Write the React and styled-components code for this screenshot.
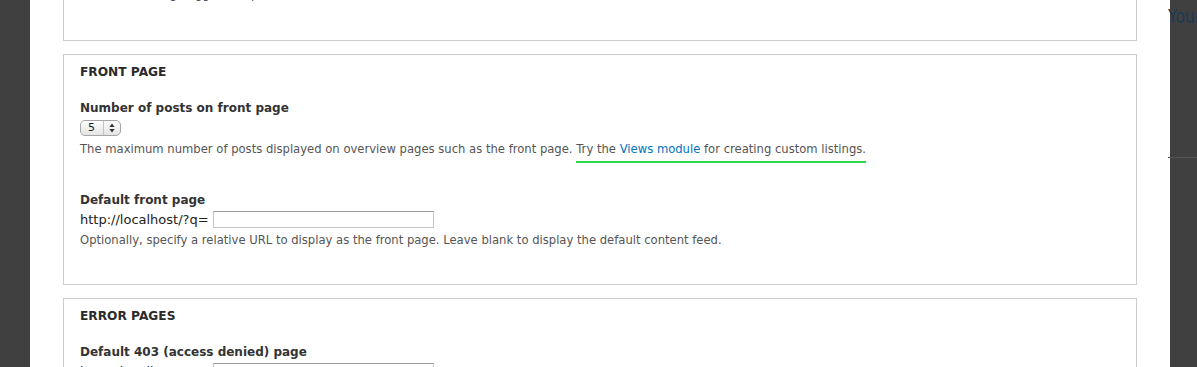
import React from "react";
import styled, { createGlobalStyle } from "styled-components";

const GlobalStyle = createGlobalStyle`
  html, body {
    margin: 0;
    padding: 0;
    background: #404040;
  }
  body {
    font-family: "DejaVu Sans", "Lucida Grande", Verdana, sans-serif;
  }
`;

const Page = styled.div`
  display: flex;
  height: 367px;
  overflow: hidden;
`;

const Rail = styled.div`
  width: 30px;
  flex: none;
  background: #404040;
`;

const Main = styled.div`
  width: 1140px;
  flex: none;
  background: #fff;
  overflow: hidden;
`;

const SideRail = styled.div`
  flex: 1;
  min-width: 0;
  background: #404040;
`;

const SideHeader = styled.div`
  margin-left: -2px;
  padding-top: 4px;
  height: 153px;
  border-bottom: 1px solid #545454;
  white-space: nowrap;
`;

const SideTitle = styled.span`
  display: inline-block;
  font-family: "DejaVu Sans", sans-serif;
  font-size: 20px;
  line-height: 24px;
  color: #1c3a4f;
  transform: scaleX(0.78);
  transform-origin: left center;
`;

const Fieldset = styled.fieldset`
  margin: ${(p) => (p.$first ? "-15px" : "0")} 33px 13px;
  padding: ${(p) => (p.$first ? "0" : "9px")} 16px 0;
  min-height: ${(p) => p.$height}px;
  border: 1px solid #ccc;
  box-sizing: border-box;
`;

const Legend = styled.div`
  font-size: 12.2px;
  font-weight: bold;
  text-transform: uppercase;
  line-height: 16px;
  color: #2a2a2a;
  margin-bottom: 20px;
`;

const Item = styled.div`
  margin-bottom: ${(p) => p.$gap || 0}px;
`;

const Label = styled.div`
  font-size: 12px;
  font-weight: bold;
  line-height: 16px;
  color: #333;
  margin-bottom: ${(p) => p.$gap ?? 3}px;
`;

const Description = styled.div`
  font-size: 11.6px;
  line-height: 16px;
  color: #555;
  margin-top: ${(p) => p.$top ?? 4}px;
  white-space: nowrap;
`;

const Link = styled.a`
  color: #0074bd;
  text-decoration: none;
`;

const Highlight = styled.span`
  padding-bottom: 5px;
  border-bottom: 2px solid #2fd84a;
`;

const Select = styled.div`
  display: flex;
  align-items: center;
  width: 41px;
  height: 16px;
  box-sizing: border-box;
  border: 1px solid #a5a5a5;
  border-radius: 5px;
  background: linear-gradient(#fdfdfd, #e4e4e4);
  font-size: 11px;
  color: #222;
`;

const SelectValue = styled.span`
  flex: 1;
  padding-left: 7px;
  line-height: 14px;
`;

const SelectArrows = styled.span`
  width: 16px;
  height: 14px;
  display: flex;
  align-items: center;
  justify-content: center;
  border-left: 1px solid #c4c4c4;
`;

const FieldRow = styled.div`
  display: flex;
  align-items: center;
  gap: 4px;
  height: 17px;
`;

const Prefix = styled.span`
  font-size: 13px;
  line-height: 17px;
  color: #222;
`;

const TextInput = styled.input`
  width: 221px;
  height: 17px;
  box-sizing: border-box;
  margin: 0;
  padding: 0 3px;
  border: 1px solid #c4c4c4;
  border-top-color: #9a9a9a;
  background: #fff;
  font-size: 12px;
`;

function Arrows() {
  return (
    <svg width="6" height="10" viewBox="0 0 6 10">
      <path d="M3 0.5 L5.6 4 H0.4 Z" fill="#333" />
      <path d="M3 9.5 L5.6 6 H0.4 Z" fill="#333" />
    </svg>
  );
}

export default function App() {
  return (
    <>
      <GlobalStyle />
      <Page>
        <Rail />
        <Main>
          <Fieldset $first $height={56}>
            <Description $top={0}>this e-mail being flagged as spam.)</Description>
          </Fieldset>

          <Fieldset $height={231}>
            <Legend>Front page</Legend>
            <Item $gap={35}>
              <Label $gap={4}>Number of posts on front page</Label>
              <Select>
                <SelectValue>5</SelectValue>
                <SelectArrows>
                  <Arrows />
                </SelectArrows>
              </Select>
              <Description $top={5}>
                The maximum number of posts displayed on overview pages such as the front page.{" "}
                <Highlight>
                  Try the <Link href="#">Views module</Link> for creating custom listings.
                </Highlight>
              </Description>
            </Item>
            <Item>
              <Label>Default front page</Label>
              <FieldRow>
                <Prefix>http://localhost/?q=</Prefix>
                <TextInput type="text" />
              </FieldRow>
              <Description $top={4}>
                Optionally, specify a relative URL to display as the front page. Leave blank to display the default content feed.
              </Description>
            </Item>
          </Fieldset>

          <Fieldset $height={120}>
            <Legend>Error pages</Legend>
            <Item>
              <Label>Default 403 (access denied) page</Label>
              <FieldRow>
                <Prefix>http://localhost/?q=</Prefix>
                <TextInput type="text" />
              </FieldRow>
            </Item>
          </Fieldset>
        </Main>
        <SideRail>
          <SideHeader>
            <SideTitle>Your</SideTitle>
          </SideHeader>
        </SideRail>
      </Page>
    </>
  );
}
